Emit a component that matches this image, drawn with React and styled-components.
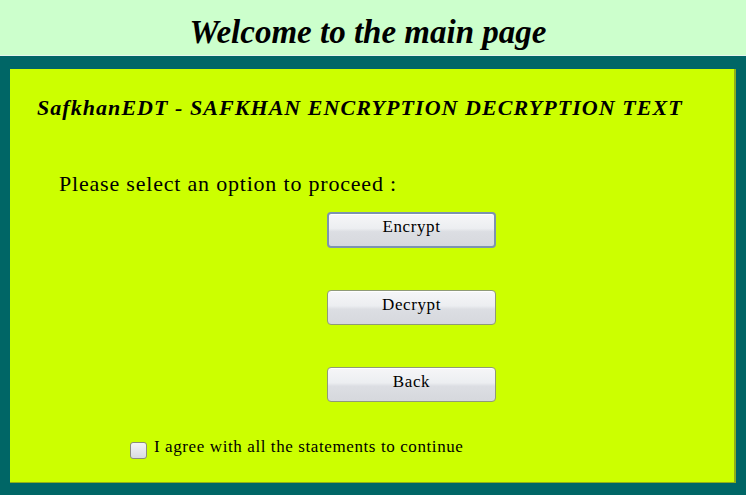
import React from "react";
import styled, { createGlobalStyle } from "styled-components";

const Global = createGlobalStyle`
  html, body { margin: 0; padding: 0; height: 100%; overflow: hidden; }
  body { font-family: "Liberation Serif", "Times New Roman", serif; background: #006666; }
  #root { height: 100%; }
`;

const Page = styled.div`
  display: flex;
  flex-direction: column;
  height: 495px;
`;

const Header = styled.header`
  height: 56px;
  background: #ccffcc;
  border-bottom: 1px solid #e6f5ec;
  box-shadow: 0 1px 0 #8fb9ae;
  display: flex;
  align-items: center;
  justify-content: center;
  padding-right: 10px;
  box-sizing: border-box;
`;

const Title = styled.h1`
  margin: 9px 0 0;
  font-size: 33px;
  font-weight: bold;
  font-style: italic;
  color: #000;
`;

const Main = styled.main`
  flex: 1;
  background: #006666;
  padding: 13px 10px 12px 10px;
  display: flex;
  box-sizing: border-box;
`;

const Panel = styled.section`
  flex: 1;
  background: #ccff00;
  border-right: 2px solid #8fae1a;
  border-bottom: 1px solid #8fae1a;
  display: flex;
  flex-direction: column;
  padding: 26px 0 0 27px;
  box-sizing: border-box;
`;

const Subtitle = styled.h2`
  margin: 0;
  font-size: 22px;
  letter-spacing: 1.05px;
  font-weight: bold;
  font-style: italic;
  color: #000;
`;

const Prompt = styled.p`
  margin: 50px 0 0 22px;
  font-size: 22px;
  letter-spacing: 0.8px;
  color: #000;
`;

const Buttons = styled.div`
  display: flex;
  flex-direction: column;
  gap: 42px;
  margin: 15px 0 0 290px;
`;

const Button = styled.button`
  width: 169px;
  height: ${(p) => (p.$focused ? "36px" : "35px")};
  border-radius: 4px;
  border: ${(p) => (p.$focused ? "2px solid #7d93b0" : "1px solid #8f9a78")};
  background: linear-gradient(#f6f6f8 0%, #eceef1 45%, #dcdee3 55%, #d6d8dd 100%);
  box-shadow: inset 0 1px 0 #ffffff;
  font-family: "Liberation Serif", "Times New Roman", serif;
  font-size: 17px;
  letter-spacing: 0.6px;
  color: #000;
  padding: 0 0 6px;
  box-sizing: border-box;
  cursor: pointer;
`;

const Agree = styled.label`
  display: flex;
  align-items: center;
  gap: 7px;
  margin: 32px 0 0 93px;
  font-size: 17px;
  letter-spacing: 0.6px;
  color: #000;
`;

const Box = styled.span`
  flex: none;
  width: 15px;
  height: 15px;
  border: 1px solid #8c8c7c;
  border-radius: 3px;
  background: linear-gradient(#f4f4f6, #d9dbe0);
  margin-top: 8px;
`;

export default function App() {
  return (
    <>
      <Global />
      <Page>
        <Header>
          <Title>Welcome to the main page</Title>
        </Header>
        <Main>
          <Panel>
            <Subtitle>SafkhanEDT - SAFKHAN ENCRYPTION DECRYPTION TEXT</Subtitle>
            <Prompt>Please select an option to proceed :</Prompt>
            <Buttons>
              <Button $focused>Encrypt</Button>
              <Button>Decrypt</Button>
              <Button>Back</Button>
            </Buttons>
            <Agree>
              <Box />
              I agree with all the statements to continue
            </Agree>
          </Panel>
        </Main>
      </Page>
    </>
  );
}
